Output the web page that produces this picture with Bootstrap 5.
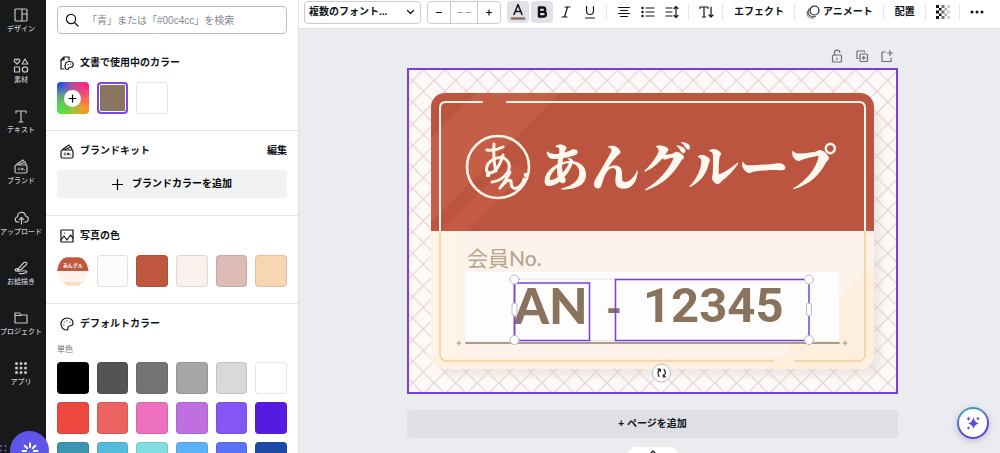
<!DOCTYPE html>
<html lang="ja">
<head>
<meta charset="utf-8">
<meta name="viewport" content="width=device-width, initial-scale=1">
<title>会員証デザイン</title>
<link href="https://cdn.jsdelivr.net/npm/bootstrap@5.3.0/dist/css/bootstrap.min.css" rel="stylesheet">
<style>
body{font-family:"Liberation Sans","Noto Sans CJK JP",sans-serif;font-size:10px;line-height:20px;color:#0e1318;background:#ebecf0}
svg{display:block;fill:none;stroke:currentColor;stroke-width:1.2;stroke-linecap:round;stroke-linejoin:round}
svg.art,svg.solid{stroke:none}
.rail{width:46px;background:#18191b}
.rail-list{height:387px;width:42px;padding-top:8px}
.rail-list a{color:#c3c6ca;font-size:7px;font-weight:500;line-height:10px;gap:2px;white-space:nowrap}
.panel{width:253px;background:#fff;border-right:1px solid #dfe0e5}
.sect{padding:10px 11px 16px;border-bottom:1px solid #e3e4e7}
.sect.brand-kit{padding-bottom:17px}
.sect h2{font-size:10px;line-height:20px;font-weight:700;margin:0}
.sect-head{gap:6px;margin-bottom:9px}
.sect-head svg{width:14px;margin-left:3px}
.search-box{margin:-4px 0 19px}
.search-box input{height:28px;font-size:10px;border:1px solid #b9bcc2;border-radius:4px;padding:0 6px 0 29px}
.search-box input::placeholder{color:#85898f}
.search-box svg{position:absolute;left:8px;top:7px}
.sub-label{font-size:8px;line-height:14px;margin-bottom:5px;color:#6c7178}
.swatches{display:grid;grid-template-columns:repeat(6,1fr);gap:8px}
.swatch{height:32px;border:1px solid rgba(30,40,60,.12);border-radius:4px;padding:0;overflow:hidden}
.rainbow{background:radial-gradient(circle at 100% 0,#ff0a8c,transparent 60%),radial-gradient(circle at 0 100%,#35f03a,transparent 65%),radial-gradient(circle at 0 0,#1238ff,transparent 75%),radial-gradient(circle at 100% 100%,#ff8a1a,#f7d060);border:0}
.rainbow span{width:17px;height:17px;background:#fff;border-radius:50%}
.picked{border:2px solid #7d47e8;background:#8a7560;box-shadow:inset 0 0 0 1px #fff}
.add-color{height:28px;background:#f1f2f4;font-size:10px;font-weight:700;border:0;border-radius:4px;gap:9px}
.plain-btn{border:0;background:none;padding:0;color:inherit;font-weight:700;font-size:10px;line-height:20px}
.toolbar{height:29px;background:#fff;border-bottom:1px solid #dcdde2;padding:0 0 4px 5px}
.font-pick{width:117px;margin-right:6px}
.font-pick select{width:100%;height:23px;font-size:10px;font-weight:700;border:1px solid #c9cbd0;border-radius:4px;appearance:none;background:#fff;padding:0 16px 0 4px;color:inherit}
.font-pick svg{position:absolute;right:6px;top:8px;pointer-events:none}
.stepper{width:74px;height:23px;border:1px solid #c9cbd0;border-radius:4px;margin-right:6px}
.stepper button{width:22px}
.stepper input{width:28px;border:solid #c9cbd0;border-width:0 1px;font-size:10px;text-align:center;color:#888;padding:0}
.tool{width:22px;height:22px;border-radius:4px;border:0;background:none;padding:0;margin-right:2px;color:inherit;display:grid;place-items:center}
.tool.on{background:#e1e2e7}
.tool:has(+ .rule){margin-right:0}
.rule{width:1px;height:16px;background:#e6e7ea;margin:0 6px 0 5px}
.text-tool{padding:0 5px;white-space:nowrap;gap:3px}
.work{padding:20px 102px 0 108px}
.page-tools{gap:11px;padding-right:4px;margin-bottom:5px;color:#6b6f76}
.artboard{border:1px solid #7a3fe0;box-shadow:inset 0 0 0 1px #7a3fe0}
.add-page{height:28px;background:#dfe0e5;border:0;border-radius:4px;font-size:10px;font-weight:700;margin-top:16px;color:inherit}
.pull-tab{left:50%;bottom:-10px;width:50px;height:16px;margin-left:-22px;border-radius:8px;background:#fff}
.assist{right:11px;bottom:14px;width:32px;height:32px;border-radius:50%;border:2px solid transparent;background:linear-gradient(#fff,#fff) padding-box,linear-gradient(160deg,#35b5b8,#6a3fd6 70%) border-box;box-shadow:0 2px 6px rgba(60,60,120,.25);padding:0}
.help-bubble{left:10px;bottom:-17px;width:39px;height:39px;border-radius:50%;background:#5f55e8;color:#fff;border:0;padding:0}
.drag-dots{left:0;bottom:0}
</style>
</head>
<body class="vh-100 overflow-hidden">
<div class="d-flex vh-100 position-relative overflow-hidden">

<nav class="rail flex-shrink-0">
<div class="rail-list d-flex flex-column justify-content-between">
<a href="#" class="d-flex flex-column align-items-center text-decoration-none"><svg width="14" height="14" viewBox="0 0 14 14"><rect x="1" y="1" width="12" height="12" rx="1"/><path d="M8 1v12M8 6h5"/></svg>デザイン</a>
<a href="#" class="d-flex flex-column align-items-center text-decoration-none"><svg width="16" height="15" viewBox="0 0 16 15"><path d="M4 6L1.500 3.500C.5 1.500 3 0 4 2C5 0 7.500 1.500 6.500 3.500ZM12 1L15 6H9ZM1.500 9h5v5h-5z"/><circle cx="12" cy="11.500" r="2.700"/></svg>素材</a>
<a href="#" class="d-flex flex-column align-items-center text-decoration-none"><svg width="14" height="14" viewBox="0 0 14 14"><path d="M2 4V2h10v2M7 2v11M5 13h4"/></svg>テキスト</a>
<a href="#" class="d-flex flex-column align-items-center text-decoration-none"><svg width="14" height="15" viewBox="0 0 14 15"><rect x="1" y="6" width="12" height="8" rx="1.500"/><path d="M2.500 5.500L9 1l1.500 2M5 5.500L11 3l1 2.500"/><path stroke-width=".9" d="M5.500 9c-2-.5-2 2.500 0 2M10.500 11h.1"/><circle cx="8" cy="10" r="1" stroke-width=".9"/></svg>ブランド</a>
<a href="#" class="d-flex flex-column align-items-center text-decoration-none"><svg width="15" height="14" viewBox="0 0 15 14"><path d="M5 11H4C.5 11 .3 6.500 3.500 6C3.500 0 11 0 11.500 5C15.500 5.500 15 11 11 11H10M7.500 13V6.500M5.300 8.700L7.500 6.500L9.700 8.700"/></svg>アップロード</a>
<a href="#" class="d-flex flex-column align-items-center text-decoration-none"><svg width="14" height="14" viewBox="0 0 14 14"><path d="M4 8L10 1.500C12 .5 13.500 2 12.500 3.500L7 8.500L3.500 9ZM4 8C2 7 0 9 2 10C4 11 12 8.500 13 10.500C13 12.500 7 13 5 12.500"/></svg>お絵描き</a>
<a href="#" class="d-flex flex-column align-items-center text-decoration-none"><svg width="14" height="14" viewBox="0 0 14 14"><path d="M1 12V2h4.500l1.500 2h6v8zM1 4.500h6"/></svg>プロジェクト</a>
<a href="#" class="d-flex flex-column align-items-center text-decoration-none"><svg width="14" height="14" viewBox="0 0 14 14"><path stroke-width="3" d="M2.500 2.500h.01M7 2.500h.01M11.500 2.500h.01M2.500 7h.01M7 7h.01M11.500 7h.01M2.500 11.500h.01M7 11.500h.01M11.500 11.500h.01"/></svg>アプリ</a>
</div>
</nav>

<aside class="panel flex-shrink-0 overflow-hidden">
<section class="sect">
<div class="search-box position-relative">
<svg width="14" height="14" viewBox="0 0 14 14"><circle cx="6" cy="6" r="4.600"/><path d="M9.500 9.500L13 13"/></svg>
<input type="search" class="w-100" aria-label="色を検索" placeholder="「青」または「#00c4cc」を検索">
</div>
<div class="sect-head d-flex align-items-center"><svg height="15" viewBox="0 0 14 15"><path d="M4 13H1V4l3-3h5v3M1 4h3V1"/><path d="M9.500 5.500C4 5.500 4 13 7.500 13.500C9 13.500 8 11.500 9.500 11.500C14.500 11.500 14.500 5.500 9.500 5.500ZM8 8.500h.1M10.500 8h.1"/></svg><h2>文書で使用中のカラー</h2></div>
<div class="swatches">
<button class="swatch rainbow d-flex align-items-center justify-content-center" aria-label="新しい色"><span><svg width="17" height="17" viewBox="0 0 17 17"><path d="M8.500 5v7M5 8.500h7"/></svg></span></button>
<button class="swatch picked" aria-label="#8a7560"></button>
<button class="swatch bg-white" aria-label="白"></button>
</div>
</section>
<section class="sect brand-kit">
<div class="sect-head d-flex align-items-center"><svg height="15" viewBox="0 0 14 15"><rect x="1" y="6" width="12" height="8" rx="1.500"/><path d="M2.500 5.500L9 1l1.500 2M5 5.500L11 3l1 2.500"/><path stroke-width=".9" d="M5.500 9c-2-.5-2 2.500 0 2M10.500 11h.1"/><circle cx="8" cy="10" r="1" stroke-width=".9"/></svg><h2>ブランドキット</h2><button class="plain-btn ms-auto">編集</button></div>
<button class="add-color w-100 d-flex align-items-center justify-content-center"><svg width="11" height="11" viewBox="0 0 11 11"><path d="M5.500 0v11M0 5.500h11"/></svg>ブランドカラーを追加</button>
</section>
<section class="sect">
<div class="sect-head d-flex align-items-center"><svg height="14" viewBox="0 0 14 14"><rect x="1" y="1" width="12" height="12"/><path d="M1 11l3-4 3 4 3.500-5 2.500 3M4.500 4h.1"/></svg><h2>写真の色</h2></div>
<div class="swatches">
<button class="swatch border-0 bg-white" aria-label="写真"><svg class="solid w-100" height="32" viewBox="0 0 32 32"><path fill="#c0573f" d="M0 16Q2 3 10 2H22Q30 3 32 16z"/><path fill="#fff3ea" d="M0 16H32L28 28H4z"/><path fill="#f8ddc0" d="M6 27H26L22 31H10z"/><text x="6" y="12" font-size="5" font-weight="700" fill="#fff">あんグル</text></svg></button>
<button class="swatch" style="background:#fdfbfc" aria-label="#fdfbfc"></button><button class="swatch" style="background:#be5640" aria-label="#be5640"></button><button class="swatch" style="background:#fbf0ec" aria-label="#fbf0ec"></button><button class="swatch" style="background:#dcbcb5" aria-label="#dcbcb5"></button><button class="swatch" style="background:#f7d6b2" aria-label="#f7d6b2"></button>
</div>
</section>
<section class="sect">
<div class="sect-head d-flex align-items-center"><svg height="14" viewBox="0 0 14 14"><path d="M7.500 1C-1.500 1-.5 13 6.500 13C9.500 13 6 9.500 9.500 9C11.500 8.800 13 8.500 13 6C13 3 10.500 1 7.500 1zM3.800 8h.1M4.200 5h.1M7 3.800h.1M9.800 5h.1"/></svg><h2>デフォルトカラー</h2></div>
<div class="sub-label">単色</div>
<div class="swatches">
<button class="swatch" style="background:#000" aria-label="#000"></button><button class="swatch" style="background:#545454" aria-label="#545454"></button><button class="swatch" style="background:#737373" aria-label="#737373"></button><button class="swatch" style="background:#a6a6a6" aria-label="#a6a6a6"></button><button class="swatch" style="background:#d9d9d9" aria-label="#d9d9d9"></button><button class="swatch" style="background:#fff" aria-label="#fff"></button>
<button class="swatch" style="background:#ec483e" aria-label="#ec483e"></button><button class="swatch" style="background:#ec625e" aria-label="#ec625e"></button><button class="swatch" style="background:#ed70c0" aria-label="#ed70c0"></button><button class="swatch" style="background:#c070de" aria-label="#c070de"></button><button class="swatch" style="background:#8556f6" aria-label="#8556f6"></button><button class="swatch" style="background:#561be0" aria-label="#561be0"></button>
<button class="swatch" style="background:#3c95ae" aria-label="#3c95ae"></button><button class="swatch" style="background:#55bbdc" aria-label="#55bbdc"></button><button class="swatch" style="background:#80dde2" aria-label="#80dde2"></button><button class="swatch" style="background:#5cb2f8" aria-label="#5cb2f8"></button><button class="swatch" style="background:#5a72f5" aria-label="#5a72f5"></button><button class="swatch" style="background:#1d4aa5" aria-label="#1d4aa5"></button>
</div>
</section>
</aside>

<main class="flex-grow-1 position-relative overflow-hidden">
<div class="toolbar d-flex align-items-center">
<div class="font-pick position-relative"><select aria-label="フォント"><option>複数のフォント...</option></select><svg width="9" height="7" viewBox="0 0 9 7"><path d="M1.500 1.500l3 3 3-3"/></svg></div>
<div class="stepper d-flex"><button class="plain-btn" aria-label="小さく"><svg width="22" height="21" viewBox="0 0 22 21"><path d="M8.500 10.500h5"/></svg></button><input type="text" value="– –" aria-label="サイズ"><button class="plain-btn" aria-label="大きく"><svg width="22" height="21" viewBox="0 0 22 21"><path d="M8.500 10.500h5M11 8v5"/></svg></button></div>
<button class="tool on" aria-label="文字色"><svg width="18" height="20" viewBox="0 0 18 20"><path stroke-width="1.500" d="M5 12.500L9 2.500l4 10M6.500 9.500h5"/><path d="M3 16.500h12" stroke="#8a7560" stroke-width="2.600"/></svg></button>
<button class="tool on" aria-label="太字"><svg width="14" height="14" viewBox="0 0 14 14"><path stroke-width="2.400" d="M4 2.500h4a2.200 2.200 0 0 1 0 4.400H4zM4 6.900h4.600a2.300 2.300 0 0 1 0 4.600H4z"/></svg></button>
<button class="tool" aria-label="斜体"><svg width="14" height="14" viewBox="0 0 14 14"><path d="M6 2h5M3 12h5M8.500 2l-3 10"/></svg></button>
<button class="tool" aria-label="下線"><svg width="14" height="14" viewBox="0 0 14 14"><path d="M3.500 1.500V6a3.500 3.500 0 0 0 7 0V1.500M2.500 13h9"/></svg></button>
<span class="rule"></span>
<button class="tool" aria-label="揃え"><svg width="14" height="14" viewBox="0 0 14 14"><path d="M1.500 2.500h11M3.500 5.500h7M1.500 8.500h11M3.500 11.500h7"/></svg></button>
<button class="tool" aria-label="リスト"><svg width="14" height="14" viewBox="0 0 14 14"><path d="M5 3h8M5 7h8M5 11h8"/><path stroke-width="2.400" d="M1.500 3h.01M1.500 7h.01M1.500 11h.01"/></svg></button>
<button class="tool" aria-label="行間"><svg width="14" height="14" viewBox="0 0 14 14"><path d="M1 3h6M1 7h6M1 11h6M11 1.500v11M9 3.500l2-2 2 2M9 10.500l2 2 2-2"/></svg></button>
<span class="rule"></span>
<button class="tool" aria-label="縦書き"><svg width="15" height="14" viewBox="0 0 15 14"><path d="M1 3.500V2h8v1.500M5 2v10M3.500 12h3M12 2v10M10 10l2 2 2-2"/></svg></button>
<span class="rule"></span>
<button class="plain-btn text-tool">エフェクト</button>
<span class="rule"></span>
<button class="plain-btn text-tool d-flex align-items-center"><svg width="14" height="14" viewBox="0 0 14 14"><circle cx="8.500" cy="5.500" r="4.500"/><path opacity=".75" d="M3 4C0 9 5 13 9.500 11.500"/><path opacity=".45" d="M1.500 6.500C0 11 4 14 7.500 13"/></svg>アニメート</button>
<span class="rule"></span>
<button class="plain-btn text-tool">配置</button>
<span class="rule"></span>
<button class="tool" aria-label="透明度"><svg class="solid" width="14" height="14" viewBox="0 0 14 14"><g fill="#111"><path d="M0 0h3v3H0zM0 5.500h3v3H0zM0 11h3v3H0zM3 3h2.500v2.500H3zM3 8.500h2.500V11H3z"/><path opacity=".6" d="M5.500 0h3v3h-3zM5.500 5.500h3v3h-3zM5.500 11h3v3h-3z"/><path opacity=".35" d="M8.500 3H11v2.500H8.500zM8.500 8.500H11V11H8.500z"/><path opacity=".2" d="M11 0h3v3h-3zM11 5.500h3v3h-3zM11 11h3v3h-3z"/></g></svg></button>
<span class="rule"></span>
<button class="tool" aria-label="その他"><svg width="14" height="14" viewBox="0 0 14 14"><path stroke-width="3" d="M2 7h.01M7 7h.01M12 7h.01"/></svg></button>
</div>

<div class="work">
<div class="page-tools d-flex justify-content-end">
<button class="plain-btn" aria-label="ロック"><svg width="14" height="14" viewBox="0 0 14 14"><rect x="2.500" y="6" width="9" height="7" rx="1"/><path d="M4.500 6V4a2.700 2.700 0 0 1 5.400-.5M7 9v1.500"/></svg></button>
<button class="plain-btn" aria-label="複製"><svg width="14" height="14" viewBox="0 0 14 14"><rect x="5" y="5" width="7.500" height="7.500" rx="1"/><path d="M3 9.500H2V2h7.500v1M8.700 7.300v3M7.200 8.800h3"/></svg></button>
<button class="plain-btn" aria-label="追加"><svg width="14" height="14" viewBox="0 0 14 14"><path d="M5 3H2v9.500h9V9M10 1.500v5M7.500 4h5"/></svg></button>
</div>
<div class="artboard">
<svg class="art w-100 position-relative z-n1" viewBox="1 1 489 324" role="img" aria-label="会員証">
<defs>
<pattern id="lattice" x="5.500" y="12.500" width="21.600" height="21.600" patternUnits="userSpaceOnUse"><path d="M0 0L21.600 21.600M21.600 0L0 21.600" stroke="#e6cfcc" stroke-width="1.200"/></pattern>
<linearGradient id="cream" x1="0" y1="0" x2="1" y2="0"><stop offset="0" stop-color="#fff5e4"/><stop offset=".08" stop-color="#fdf3ec"/><stop offset="1" stop-color="#fdf3ea"/></linearGradient>
<clipPath id="face"><rect x="24" y="25" width="443" height="276" rx="14"/></clipPath>
<filter id="soft"><feGaussianBlur stdDeviation="3"/></filter>
</defs>
<rect width="491" height="326" fill="#fdf9f8"/>
<rect width="491" height="326" fill="url(#lattice)"/>
<rect x="34" y="36" width="440" height="272" rx="14" fill="#d8d0ca" opacity=".4" filter="url(#soft)"/>
<g clip-path="url(#face)">
<rect x="24" y="25" width="443" height="138" fill="#bc5540"/>
<path d="M24 70L69 25H153L24 154z" fill="#c76047" opacity=".8"/>
<path d="M34 163L102 95L120 103L60 163z" fill="#c76047" opacity=".5"/>
<rect x="24" y="163" width="443" height="139" fill="url(#cream)"/>
<path d="M467 195L361 301H467z" fill="#fcecda" opacity=".75"/>
<path d="M24 290H467V302H24z" fill="#fff0da" opacity=".7"/>
</g>
<path d="M33 163V40Q33 34 39 34H75M100 34H452Q458 34 458 40V163" stroke="#fff5e8" stroke-width="2"/>
<path d="M33 163V286Q33 293 40 293H367M388 293H451Q458 293 458 286V163" stroke="#f6cd98" stroke-width="1.500"/>
<circle cx="91" cy="99" r="31" stroke="#fff5e8" stroke-width="2.600"/>
<g stroke="#fff5e8" stroke-width="3">
<path d="M80 82Q88 83 96 79M87 76Q86 92 89 103M96 87Q91 104 83 105Q77 104 81 96Q88 88 97 90Q105 95 101 104Q95 113 85 114"/>
<path d="M103 104Q98 114 93 120Q101 110 104 113Q104 122 110 120Q116 117 117 111"/>
</g>
<circle cx="81" cy="107" r="2.300" fill="#fff5e8"/><circle cx="119" cy="107" r="2.300" fill="#fff5e8"/>
<text x="133" y="118" font-size="50" font-weight="900" font-family="'Noto Serif CJK JP','Noto Sans CJK JP',sans-serif" fill="#fff8ee">あんグループ</text>
<text x="60" y="198" font-size="21" font-family="Lato,'Noto Sans CJK JP',sans-serif" fill="#b6a58d"><tspan font-family="'Noto Sans CJK JP',sans-serif">会員</tspan><tspan font-weight="500">No.</tspan></text>
<rect x="59" y="204" width="373" height="69" fill="#fefdfd"/>
<path d="M59 275H432" stroke="#aa9d8a" stroke-width="1.800"/>
<path d="M50 275h4M52 273v4M436 275h4M438 273v4" stroke="#aa9d8a" stroke-width="1.200"/>
<g fill="#8a735c" font-weight="900">
<text x="107" y="256" font-size="50" font-family="Lato,sans-serif">AN</text>
<text x="199" y="255" font-size="42" font-family="Lato,sans-serif">-</text>
<text x="236" y="254" font-size="49" font-weight="700" font-family="Roboto,sans-serif">12345</text>
</g>
<path d="M107 211H402M107 272.500H402" stroke="#c9c6d0" stroke-dasharray="1 3"/>
<path d="M107.500 215H182.500V272.500H107.500zM208.500 211.500H402V272.500H208.500z" stroke="#7a3fe0" stroke-width="1.500" stroke-linejoin="miter"/>
<path d="M107.500 211.500V272" stroke="#7a3fe0" stroke-width="1.500"/>
<g fill="#fff" stroke="#b9b9c2" stroke-width="1"><circle cx="107.500" cy="211.500" r="4.500"/><circle cx="107.500" cy="272" r="4.500"/><circle cx="402" cy="211.500" r="4.500"/><circle cx="402" cy="272" r="4.500"/><rect x="105" y="235" width="5" height="13" rx="2.500"/><rect x="399.500" y="235" width="5" height="13" rx="2.500"/>
<circle cx="254.500" cy="305" r="9"/></g>
<path d="M252 308.500Q249.500 304 253 301.500M251 301.200H253.300V303.500M257 301.500Q260 305 256.500 308.500M258.500 308.800H256.300V306.500" stroke="#222" stroke-width="1.200"/>
</svg>
</div>
<button class="add-page w-100">+ ページを追加</button>
</div>
<div class="pull-tab position-absolute"><svg class="mx-auto" width="8" height="10" viewBox="0 0 8 10"><path d="M1.500 6.500L4 4l2.500 2.500"/></svg></div>
<button class="assist position-absolute" aria-label="アシスタント"><svg class="solid mx-auto" width="16" height="16" viewBox="0 0 16 16"><g fill="#5a50d8"><path d="M8.500 2Q9.200 7.300 14 8.500Q9.200 9.500 8.500 14Q7.500 9.500 3 8.500Q7.500 7.300 8.500 2zM3.500 1.500l.7 1.600 1.600.7-1.600.7-.7 1.600-.7-1.600-1.600-.7 1.600-.7z"/><circle cx="13" cy="3.500" r="1.300"/><circle cx="3.500" cy="13" r="1.200"/></g></svg></button>
</main>

<svg class="drag-dots position-absolute" width="8" height="9" viewBox="0 0 8 9"><path stroke="#6b5fe0" stroke-width="1.800" d="M1 2h.01M5.500 2h.01M1 6.500h.01M5.500 6.500h.01"/></svg>
<button class="help-bubble position-absolute" aria-label="ヘルプ"><svg class="mx-auto" width="18" height="18" viewBox="0 0 18 18"><path stroke-width="2" d="M9 1.500V5M9 13v3.500M1.500 9H5M13 9h3.500M3.700 3.700l2.500 2.500M11.800 11.800l2.500 2.500M3.700 14.300l2.500-2.500M11.800 6.200l2.500-2.500"/></svg></button>
</div>
<script src="https://cdn.jsdelivr.net/npm/bootstrap@5.3.0/dist/js/bootstrap.bundle.min.js"></script>
</body>
</html>
